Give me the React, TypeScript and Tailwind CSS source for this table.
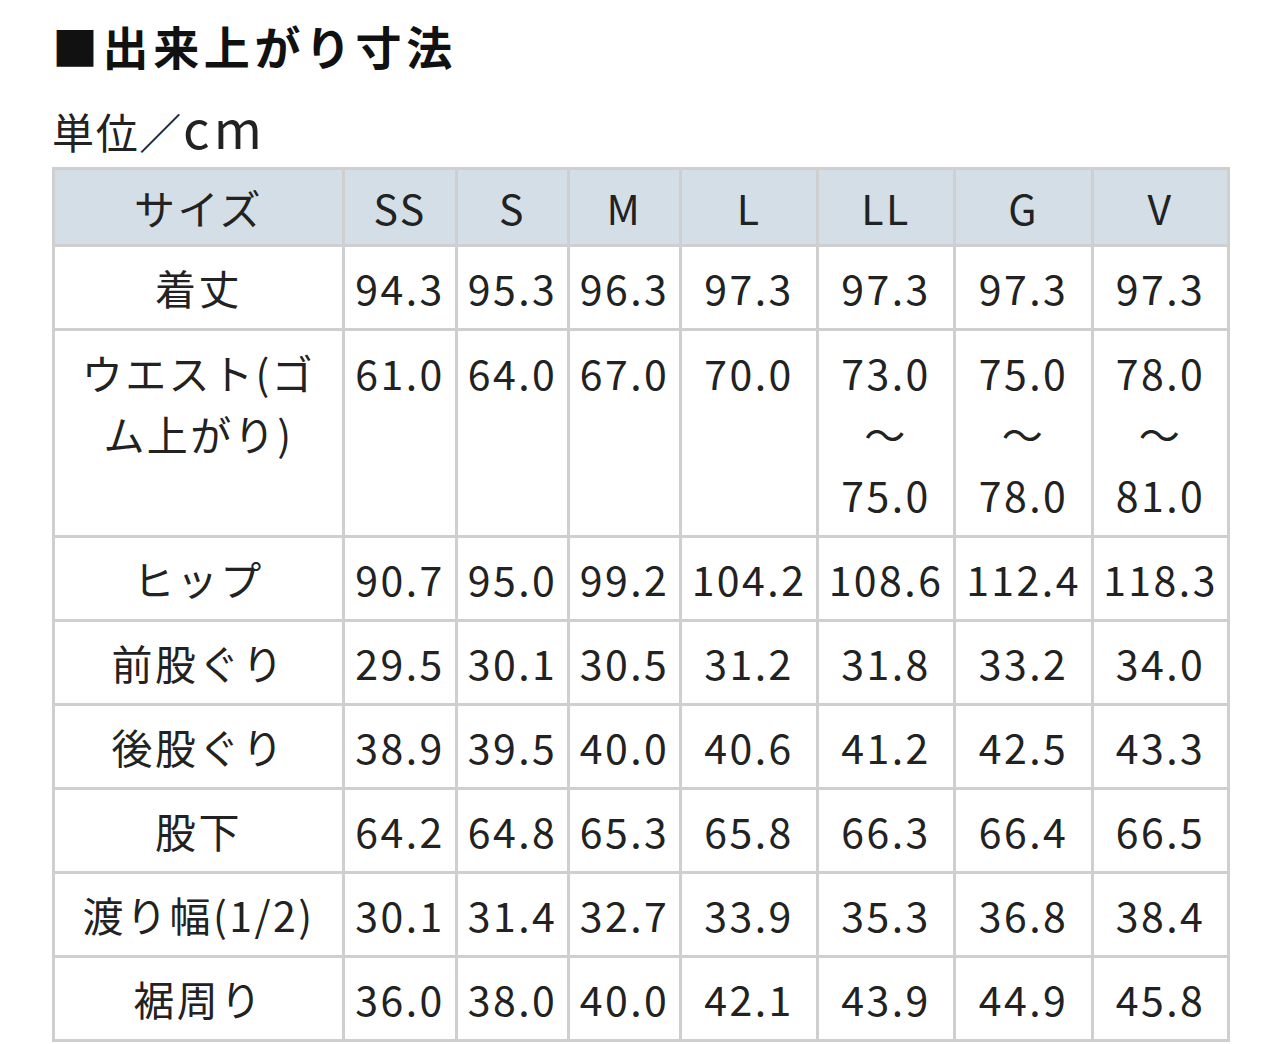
const sizes = ['SS', 'S', 'M', 'L', 'LL', 'G', 'V']

const rows: { label: React.ReactNode; values: React.ReactNode[]; tall?: boolean }[] = [
  { label: '着丈', values: ['94.3', '95.3', '96.3', '97.3', '97.3', '97.3', '97.3'] },
  {
    label: (
      <>
        ウエスト(ゴ
        <br />
        ム上がり)
      </>
    ),
    values: [
      '61.0',
      '64.0',
      '67.0',
      '70.0',
      <>73.0<br />～<br />75.0</>,
      <>75.0<br />～<br />78.0</>,
      <>78.0<br />～<br />81.0</>,
    ],
    tall: true,
  },
  { label: 'ヒップ', values: ['90.7', '95.0', '99.2', '104.2', '108.6', '112.4', '118.3'] },
  { label: '前股ぐり', values: ['29.5', '30.1', '30.5', '31.2', '31.8', '33.2', '34.0'] },
  { label: '後股ぐり', values: ['38.9', '39.5', '40.0', '40.6', '41.2', '42.5', '43.3'] },
  { label: '股下', values: ['64.2', '64.8', '65.3', '65.8', '66.3', '66.4', '66.5'] },
  { label: '渡り幅(1/2)', values: ['30.1', '31.4', '32.7', '33.9', '35.3', '36.8', '38.4'] },
  { label: '裾周り', values: ['36.0', '38.0', '40.0', '42.1', '43.9', '44.9', '45.8'] },
]

export default function App() {
  return (
    <div className="min-h-screen bg-white px-[52px] pt-[17px] text-[#222] [font-family:'Noto_Sans_CJK_JP',sans-serif]">
      <h2 className="text-[46px] font-bold leading-[56px] tracking-[0.1em] text-[#111]">■出来上がり寸法</h2>
      <p className="mt-[30px] h-[48px] text-[42px] leading-[48px] tracking-[0.04em]">
        単位／<span className="text-[52px] leading-[48px] tracking-[0.08em]">cm</span>
      </p>

      <table className="mt-[16px] w-[1178px] table-fixed border-collapse text-center text-[41px] leading-[61px] tracking-[0.06em]">
        <colgroup>
          <col className="w-[290px]" />
          <col className="w-[113px]" />
          <col className="w-[112px]" />
          <col className="w-[112px]" />
          <col className="w-[137px]" />
          <col className="w-[137px]" />
          <col className="w-[138px]" />
          <col className="w-[136px]" />
        </colgroup>
        <thead>
          <tr className="h-[77px] bg-[#d3dee6]">
            <th className="border-[3px] border-[#cfcfcf] font-normal">サイズ</th>
            {sizes.map(s => (
              <th key={s} className="border-[3px] border-[#cfcfcf] font-normal">
                {s}
              </th>
            ))}
          </tr>
        </thead>
        <tbody>
          {rows.map((row, i) => (
            <tr key={i}>
              <td
                className={
                  row.tall
                    ? 'border-[3px] border-[#cfcfcf] px-2 pt-[11px] pb-[10px] align-top'
                    : 'border-[3px] border-[#cfcfcf] px-2 py-[10px]'
                }
              >
                {row.label}
              </td>
              {row.values.map((v, j) => (
                <td
                  key={j}
                  className={
                    row.tall
                      ? 'border-[3px] border-[#cfcfcf] px-0 pt-[11px] pb-[10px] align-top whitespace-nowrap'
                      : 'border-[3px] border-[#cfcfcf] px-0 py-[10px] whitespace-nowrap'
                  }
                >
                  {v}
                </td>
              ))}
            </tr>
          ))}
        </tbody>
      </table>
    </div>
  )
}
